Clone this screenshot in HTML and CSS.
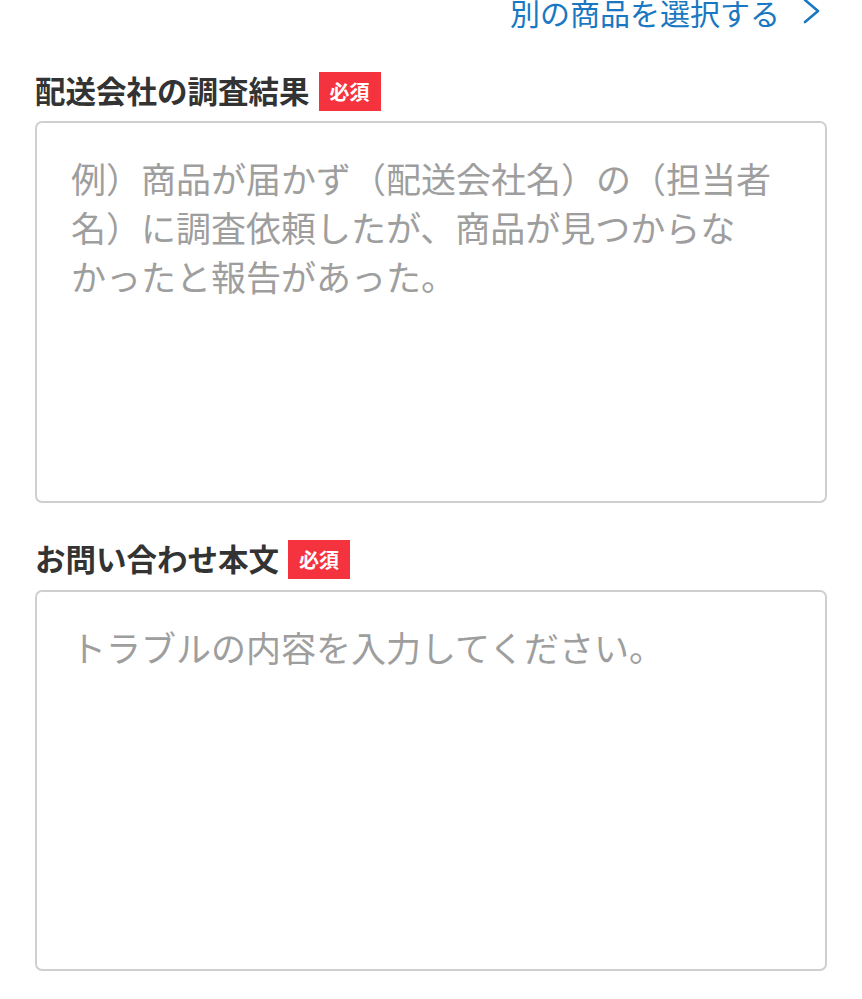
FILE: index.html
```html
<!DOCTYPE html>
<html lang="ja">
<head>
<meta charset="utf-8">
<title>お問い合わせ</title>
<link rel="stylesheet" href="styles.css">
</head>
<body>
<main class="page">
  <div class="top-row">
    <a class="select-link" href="#">
      <span class="select-text">別の商品を選択する</span>
      <svg class="chevron" width="20" height="26" viewBox="0 0 20 26" aria-hidden="true">
        <polyline points="3,2 16,13 3,24" fill="none" stroke="#1a78c2" stroke-width="2.6" stroke-linecap="round" stroke-linejoin="round"/>
      </svg>
    </a>
  </div>

  <section class="field field-first">
    <div class="field-label">
      <span class="label-text">配送会社の調査結果</span>
      <span class="badge">必須</span>
    </div>
    <textarea class="field-input" placeholder="例）商品が届かず（配送会社名）の（担当者&#10;名）に調査依頼したが、商品が見つからな&#10;かったと報告があった。"></textarea>
  </section>

  <section class="field field-second">
    <div class="field-label">
      <span class="label-text">お問い合わせ本文</span>
      <span class="badge">必須</span>
    </div>
    <textarea class="field-input field-input-second" placeholder="トラブルの内容を入力してください。"></textarea>
  </section>
</main>
</body>
</html>
```

FILE: styles.css
```css
html, body {
  margin: 0;
  padding: 0;
  background: #ffffff;
}

body {
  font-family: "Noto Sans CJK JP", "Noto Sans", sans-serif;
  color: #333333;
}

.page {
  padding: 0 35px;
  display: flex;
  flex-direction: column;
}

.top-row {
  display: flex;
  justify-content: flex-end;
  height: 24px;
}

.select-link {
  display: flex;
  align-items: center;
  gap: 22px;
  margin-right: 5px;
  text-decoration: none;
  color: #1a78c2;
  height: 24px;
}

.select-text {
  font-size: 30px;
  line-height: 24px;
  margin-left: -4px;
}

.chevron {
  display: block;
  flex: none;
  margin-top: -3px;
}

.field {
  display: flex;
  flex-direction: column;
}

.field-first {
  margin-top: 48px;
}

.field-second {
  margin-top: 37px;
}

.field-label {
  display: flex;
  align-items: center;
  gap: 9px;
  height: 39px;
}

.label-text {
  font-size: 30.5px;
  font-weight: 700;
  line-height: 39px;
  color: #333333;
  margin-top: -2px;
}

.badge {
  display: flex;
  align-items: center;
  justify-content: center;
  height: 39px;
  padding: 0 11px;
  background: #f5333f;
  color: #ffffff;
  font-size: 20px;
  font-weight: 700;
  line-height: 1;
}

.field-input {
  display: block;
  box-sizing: border-box;
  width: 100%;
  height: 382px;
  margin: 10px 0 0;
  padding: 30px 34px;
  border: 2px solid #cfcfcf;
  border-radius: 7px;
  font-family: "Noto Sans CJK JP", "Noto Sans", sans-serif;
  font-size: 35px;
  line-height: 49px;
  color: #333333;
  background: #ffffff;
  resize: none;
  outline: none;
  line-break: strict;
  overflow: hidden;
}

.field-input-second {
  height: 381px;
  margin-top: 11px;
}

.field-input::placeholder {
  color: #9e9e9e;
  opacity: 1;
}
```
